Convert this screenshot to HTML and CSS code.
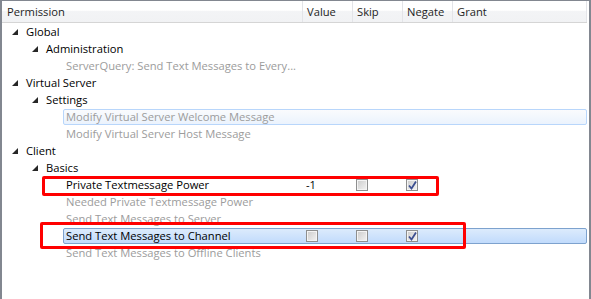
FILE: index.html
```html
<html>
  <head>
    <meta charset="utf-8" />
    <title>Permissions</title>
    <link rel="stylesheet" href="styles.css">
  </head>
  <body>
    <div class="tree">
      <div class="head">
        <div class="hcol name">Permission</div>
        <div class="hcol num">Value</div>
        <div class="hcol num">Skip</div>
        <div class="hcol num">Negate</div>
        <div class="hcol grant">Grant</div>
      </div>
      <div class="rows">
        <div class="row l0">
          <span class="exp"><svg width="6" height="6" viewBox="0 0 6 6"><polygon points="6,0 6,6 0,6" /></svg></span>
          <div class="item"><span class="name">Global</span></div>
        </div>
        <div class="row l1">
          <span class="exp"><svg width="6" height="6" viewBox="0 0 6 6"><polygon points="6,0 6,6 0,6" /></svg></span>
          <div class="item"><span class="name">Administration</span></div>
        </div>
        <div class="row l2">
          <span class="exp"></span>
          <div class="item off"><span class="name">ServerQuery: Send Text Messages to Every...</span></div>
        </div>
        <div class="row l0">
          <span class="exp"><svg width="6" height="6" viewBox="0 0 6 6"><polygon points="6,0 6,6 0,6" /></svg></span>
          <div class="item"><span class="name">Virtual Server</span></div>
        </div>
        <div class="row l1">
          <span class="exp"><svg width="6" height="6" viewBox="0 0 6 6"><polygon points="6,0 6,6 0,6" /></svg></span>
          <div class="item"><span class="name">Settings</span></div>
        </div>
        <div class="row l2">
          <span class="exp"></span>
          <div class="item off hover"><span class="name">Modify Virtual Server Welcome Message</span></div>
        </div>
        <div class="row l2">
          <span class="exp"></span>
          <div class="item off"><span class="name">Modify Virtual Server Host Message</span></div>
        </div>
        <div class="row l0">
          <span class="exp"><svg width="6" height="6" viewBox="0 0 6 6"><polygon points="6,0 6,6 0,6" /></svg></span>
          <div class="item"><span class="name">Client</span></div>
        </div>
        <div class="row l1">
          <span class="exp"><svg width="6" height="6" viewBox="0 0 6 6"><polygon points="6,0 6,6 0,6" /></svg></span>
          <div class="item"><span class="name">Basics</span></div>
        </div>
        <div class="row l2">
          <span class="exp"></span>
          <div class="item">
            <span class="name">Private Textmessage Power</span>
            <span class="cell">-1</span>
            <span class="cell"><i class="cb"></i></span>
            <span class="cell"><i class="cb on"><svg width="9" height="9" viewBox="0 0 9 9"><path d="M1 4.5 L3.5 7.5 L8 0.5" /></svg></i></span>
          </div>
        </div>
        <div class="row l2">
          <span class="exp"></span>
          <div class="item off"><span class="name">Needed Private Textmessage Power</span></div>
        </div>
        <div class="row l2">
          <span class="exp"></span>
          <div class="item off"><span class="name">Send Text Messages to Server</span></div>
        </div>
        <div class="row l2">
          <span class="exp"></span>
          <div class="item selected">
            <span class="name">Send Text Messages to Channel</span>
            <span class="cell"><i class="cb"></i></span>
            <span class="cell"><i class="cb"></i></span>
            <span class="cell"><i class="cb on"><svg width="9" height="9" viewBox="0 0 9 9"><path d="M1 4.5 L3.5 7.5 L8 0.5" /></svg></i></span>
          </div>
        </div>
        <div class="row l2">
          <span class="exp"></span>
          <div class="item off"><span class="name">Send Text Messages to Offline Clients</span></div>
        </div>
      </div>
      <div class="mark mark-power"></div>
      <div class="mark mark-channel"></div>
    </div>
  </body>
</html>
```
FILE: styles.css
```css
body {
  margin: 0;
  background: #fff;
  font-family: "Open Sans", "Noto Sans", sans-serif;
  font-size: 11.2px;
  color: #000;
}
.tree {
  position: relative;
  height: 100vh;
  box-sizing: border-box;
  border-top: 1px solid #828790;
  border-left: 2px solid #828790;
  border-right: 2px solid #828790;
  padding-right: 2px;
}
.head {
  display: flex;
  height: 22px;
  box-sizing: border-box;
  border-bottom: 1px solid #d5d5d5;
  background: linear-gradient(#ffffff 0%, #ffffff 45%, #f3f4f6 46%, #f1f2f4 100%);
  color: #1e1e1e;
}
.hcol {
  box-sizing: border-box;
  padding: 3px 0 0 5px;
  line-height: 16px;
}
.hcol.name {
  width: 300px;
}
.hcol.num {
  width: 50px;
  border-left: 1px solid #e3e4e8;
  padding-left: 4px;
}
.hcol.grant {
  flex: 1;
  border-left: 1px solid #e3e4e8;
  border-right: 1px solid #e3e4e8;
  padding-left: 4px;
}
.row {
  display: flex;
  height: 17px;
}
.l1 {
  padding-left: 20px;
}
.l2 {
  padding-left: 40px;
}
.exp {
  width: 21px;
  flex: none;
  box-sizing: border-box;
  padding: 6px 0 0 10px;
}
.exp svg {
  display: block;
  fill: #262626;
}
.item {
  flex: 1;
  display: flex;
  margin-top: 1px;
  height: 16px;
  box-sizing: border-box;
  border: 1px solid transparent;
  border-radius: 2px;
  line-height: 14px;
  white-space: nowrap;
}
.item .name {
  box-sizing: border-box;
  padding-left: 2px;
  flex: none;
  width: 238px;
}
.l0 .item .name {
  width: 278px;
}
.l1 .item .name {
  width: 258px;
}
.item .cell {
  width: 50px;
  flex: none;
  box-sizing: border-box;
  padding-left: 4px;
  display: flex;
  align-items: center;
}
.off {
  color: #9c9c9c;
}
.hover {
  border-color: #b8d6fb;
  background: linear-gradient(#fafbfd, #ebf3fd);
}
.selected {
  border-color: #7da2ce;
  background: linear-gradient(#dcebfc, #c1dbfc);
}
.cb {
  display: block;
  width: 12px;
  height: 12px;
  box-sizing: border-box;
  border: 1px solid #8e8f8f;
  background: linear-gradient(135deg, #cbcbcb, #f4f4f4);
  box-shadow: inset 0 0 0 1px #f4f4f4;
}
.cb svg {
  display: block;
  margin: 0.5px 0 0 1px;
  fill: none;
  stroke: #3c4f91;
  stroke-width: 1.8;
}
.mark {
  position: absolute;
  box-sizing: border-box;
  border: 3px solid #ff0000;
  border-radius: 2px;
}
.mark-power {
  left: 40px;
  top: 175px;
  width: 397px;
  height: 20px;
}
.mark-channel {
  left: 38px;
  top: 221px;
  width: 426px;
  height: 27px;
}
```
